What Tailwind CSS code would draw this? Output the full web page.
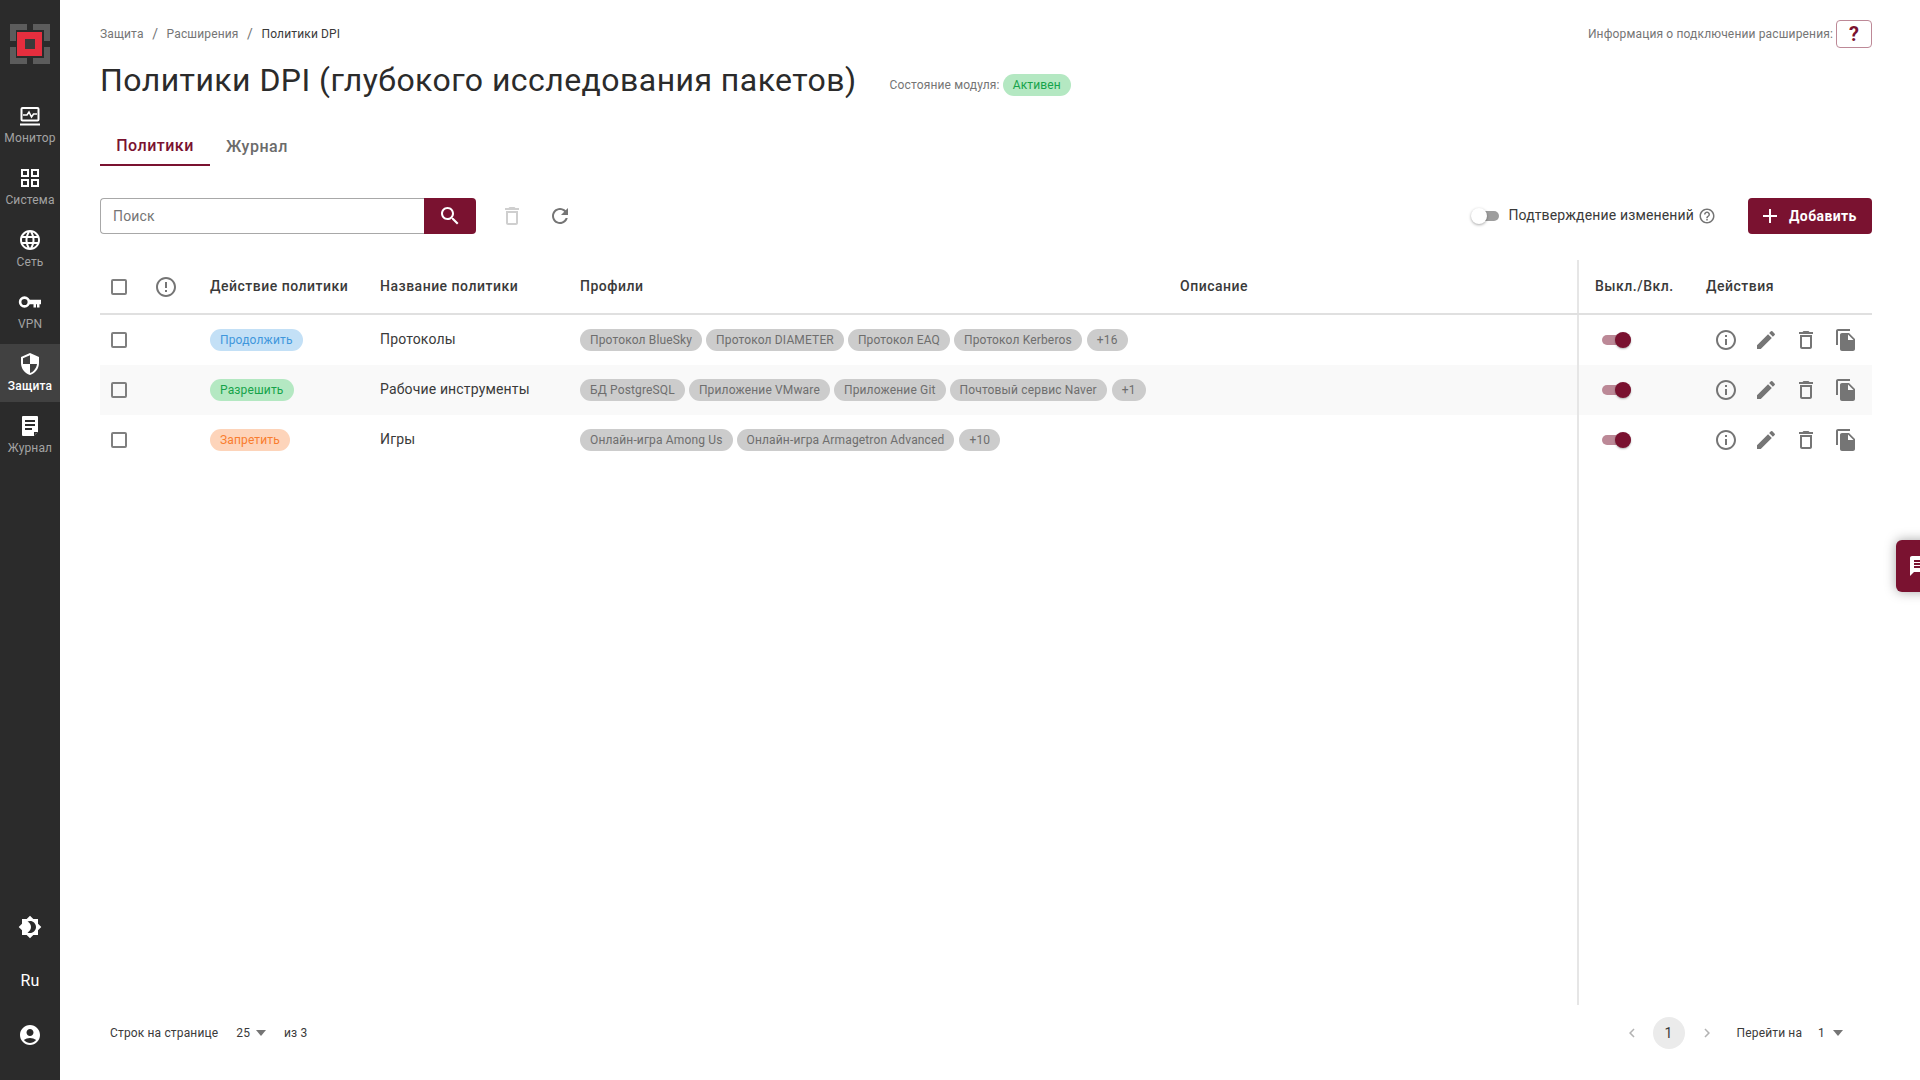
<!DOCTYPE html>
<html lang="ru">
<head>
<meta charset="utf-8">
<title>Политики DPI</title>
<script src="https://cdn.jsdelivr.net/npm/@tailwindcss/browser@4"></script>
</head>
<body class="font-['Roboto',sans-serif] bg-white text-[#2b2b2b] tracking-[0.15px]">
<div class="relative flex h-[1080px] w-[1920px] overflow-hidden">
  <!-- Sidebar -->
  <aside class="flex h-full w-[60px] shrink-0 flex-col items-center bg-[#2b2b2b] text-[12px] text-[#a3a3a3]">
    <svg class="mt-[24px] h-[40px] w-[40px]" viewBox="0 0 40 40">
      <path fill="#5c5c5c" d="M0 0h17v6H6v11H0zM23 0h17v17h-6V6H23zM0 23h6v11h11v6H0zM34 23h6v17H23v-6h11z"/>
      <rect x="7" y="8" width="25" height="24" fill="#e62e3e"/>
      <rect x="15" y="15" width="10" height="10" fill="#3a3a3a"/>
    </svg>
    <nav class="mt-[32px] flex w-full flex-col gap-[4px]">
      <a class="flex h-[58px] flex-col items-center pt-[9px]">
        <svg class="h-[24px] w-[24px]" viewBox="0 0 24 24" fill="none" stroke="#fff" stroke-width="2"><rect x="3.5" y="3" width="17" height="12.5" rx="1"/><path stroke-width="1.6" d="M5 10h4l2-3 2.5 5 2-3H19"/><path d="M2 19.5h20"/></svg>
        <span class="mt-[1px] leading-[16px]">Монитор</span>
      </a>
      <a class="flex h-[58px] flex-col items-center pt-[8px]">
        <svg class="h-[24px] w-[24px]" viewBox="0 0 24 24" fill="#fff"><path d="M3 3v8h8V3H3zm6 6H5V5h4v4zm-6 4v8h8v-8H3zm6 6H5v-4h4v4zm4-16v8h8V3h-8zm6 6h-4V5h4v4zm-6 4v8h8v-8h-8zm6 6h-4v-4h4v4z"/></svg>
        <span class="mt-[2px] leading-[16px]">Система</span>
      </a>
      <a class="flex h-[58px] flex-col items-center pt-[8px]">
        <svg class="h-[24px] w-[24px]" viewBox="0 0 24 24" fill="#fff"><path d="M11.99 2C6.47 2 2 6.48 2 12s4.47 10 9.99 10C17.52 22 22 17.52 22 12S17.52 2 11.99 2zm6.93 6h-2.95c-.32-1.25-.78-2.45-1.38-3.56 1.84.63 3.37 1.91 4.33 3.56zM12 4.04c.83 1.2 1.48 2.53 1.91 3.96h-3.82c.43-1.43 1.08-2.76 1.91-3.96zM4.26 14C4.1 13.36 4 12.69 4 12s.1-1.36.26-2h3.38c-.08.66-.14 1.32-.14 2 0 .68.06 1.34.14 2H4.26zm.82 2h2.95c.32 1.25.78 2.45 1.38 3.56-1.84-.63-3.37-1.9-4.33-3.56zm2.95-8H5.08c.96-1.66 2.49-2.93 4.33-3.56C8.81 5.55 8.35 6.75 8.03 8zM12 19.96c-.83-1.2-1.48-2.53-1.91-3.96h3.82c-.43 1.43-1.08 2.76-1.91 3.96zM14.34 14H9.66c-.09-.66-.16-1.32-.16-2 0-.68.07-1.35.16-2h4.68c.09.65.16 1.32.16 2 0 .68-.07 1.34-.16 2zm.25 5.56c.6-1.11 1.06-2.31 1.38-3.56h2.95c-.96 1.65-2.49 2.93-4.33 3.56zM16.36 14c.08-.66.14-1.32.14-2 0-.68-.06-1.34-.14-2h3.38c.16.64.26 1.31.26 2s-.1 1.36-.26 2h-3.38z"/></svg>
        <span class="mt-[2px] leading-[16px]">Сеть</span>
      </a>
      <a class="flex h-[58px] flex-col items-center pt-[8px]">
        <svg class="h-[24px] w-[24px]" viewBox="0 0 24 24" fill="#fff"><circle cx="6.5" cy="12" r="4.4" fill="none" stroke="#fff" stroke-width="2.6"/><path d="M10.5 9.8H23v4.4h-1.5V17.5h-2.5v-3.3h-1v3.3h-2.5v-3.3h-5z"/></svg>
        <span class="mt-[2px] leading-[16px]">VPN</span>
      </a>
      <a class="flex h-[58px] flex-col items-center bg-[#414141] pt-[8px] text-white">
        <svg class="h-[24px] w-[24px]" viewBox="0 0 24 24" fill="#fff"><path d="M12 1 3 5v6c0 5.55 3.84 10.74 9 12 5.16-1.26 9-6.45 9-12V5l-9-4zm0 10.99h7c-.53 4.12-3.28 7.79-7 8.94V12H5V6.3l7-3.11v8.8z"/></svg>
        <span class="mt-[2px] font-medium leading-[16px]">Защита</span>
      </a>
      <a class="flex h-[58px] flex-col items-center pt-[8px]">
        <svg class="h-[24px] w-[24px]" viewBox="0 0 24 24"><path fill="#fff" d="M5 2h14a1 1 0 0 1 1 1v15l-4 4H5a1 1 0 0 1-1-1V3a1 1 0 0 1 1-1z"/><path fill="#2b2b2b" d="M7 6h10v2H7zM7 10h10v2H7zM7 14h7v2H7zM16 22v-4h4l-1 1.6h-1.4V21z"/></svg>
        <span class="mt-[2px] leading-[16px]">Журнал</span>
      </a>
    </nav>
    <div class="mt-auto flex w-full flex-col items-center pb-[33px] text-white">
      <svg class="h-[24px] w-[24px]" viewBox="0 0 24 24" fill="#fff"><path d="M20 8.69V4h-4.69L12 .69 8.69 4H4v4.69L.69 12 4 15.31V20h4.69L12 23.31 15.31 20H20v-4.69L23.31 12 20 8.69zM12 18c-.89 0-1.74-.2-2.5-.55C11.56 16.5 13 14.42 13 12s-1.44-4.5-3.5-5.45C10.26 6.2 11.11 6 12 6c3.31 0 6 2.69 6 6s-2.69 6-6 6z"/></svg>
      <span class="mt-[30px] text-[16px] leading-[24px]">Ru</span>
      <svg class="mt-[30px] h-[24px] w-[24px]" viewBox="0 0 24 24" fill="#fff"><path d="M12 2C6.48 2 2 6.48 2 12s4.48 10 10 10 10-4.48 10-10S17.52 2 12 2zm0 4c1.93 0 3.5 1.57 3.5 3.5S13.93 13 12 13s-3.5-1.57-3.5-3.5S10.07 6 12 6zm0 14c-2.03 0-4.43-.82-6.14-2.88C7.55 15.8 9.68 15 12 15s4.45.8 6.14 2.12C16.43 19.18 14.03 20 12 20z"/></svg>
    </div>
  </aside>

  <!-- Main -->
  <main class="flex h-full min-w-0 flex-1 flex-col pl-[40px] pr-[48px]">
    <div class="flex h-[28px] mt-[20px] items-center justify-between text-[12px] text-[#757575]">
      <div class="flex items-center">
        <span>Защита</span><span class="mx-[8.5px] text-[14px]">/</span><span>Расширения</span><span class="mx-[8.5px] text-[14px]">/</span><span class="text-[#3a3a3a]">Политики DPI</span>
      </div>
      <div class="flex items-center">
        <span>Информация о подключении расширения:</span>
        <button class="ml-[3px] flex h-[28px] w-[36px] items-center justify-center rounded-[4px] border border-[#bd8997] text-[20px] font-bold text-[#7a1230]">?</button>
      </div>
    </div>

    <div class="mt-[8px] flex h-[48px] items-center">
      <h1 class="text-[32px] font-normal tracking-[0.45px] leading-[48px] text-[#2b2b2b]">Политики DPI (глубокого исследования пакетов)</h1>
      <span class="ml-[33px] mt-[10px] text-[12px] text-[#757575]">Состояние модуля:</span>
      <span class="ml-[3px] mt-[10px] flex h-[22px] items-center rounded-full bg-[#b4e8c2] px-[10px] text-[12px] text-[#16a34a]">Активен</span>
    </div>

    <div class="mt-[18px] flex h-[44px] text-[16px] font-medium tracking-[0.5px]">
      <div class="flex h-full w-[110px] items-center justify-center border-b-2 border-[#7a1230] pt-[5px] text-[#7a1230]">Политики</div>
      <div class="ml-[16px] flex h-full items-center pt-[5px] text-[#6b6b6b]">Журнал</div>
    </div>

    <div class="mt-[32px] flex h-[36px] items-center">
      <div class="flex h-[36px] w-[324px] items-center rounded-l-[4px] border border-r-0 border-[#a8a8a8] pl-[12px] text-[14px] text-[#757575]">Поиск</div>
      <button class="flex h-[36px] w-[52px] items-center justify-center rounded-r-[4px] bg-[#7a1230]">
        <svg class="h-[24px] w-[24px]" viewBox="0 0 24 24" fill="#fff"><path d="M15.5 14h-.79l-.28-.27C15.41 12.59 16 11.11 16 9.5 16 5.91 13.09 3 9.5 3S3 5.91 3 9.5 5.91 16 9.5 16c1.61 0 3.09-.59 4.23-1.57l.27.28v.79l5 4.99L20.49 19l-4.99-5zm-6 0C7.01 14 5 11.99 5 9.5S7.01 5 9.5 5 14 7.01 14 9.5 11.99 14 9.5 14z"/></svg>
      </button>
      <svg class="ml-[24px] h-[24px] w-[24px]" viewBox="0 0 24 24" fill="#cfcfcf"><path d="M6 19c0 1.1.9 2 2 2h8c1.1 0 2-.9 2-2V7H6v12zM8 9h8v10H8V9zm7.5-5-1-1h-5l-1 1H5v2h14V4h-3.5z"/></svg>
      <svg class="ml-[24px] h-[24px] w-[24px]" viewBox="0 0 24 24" fill="#757575"><path d="M17.65 6.35C16.2 4.9 14.21 4 12 4c-4.42 0-7.99 3.58-7.99 8s3.57 8 7.99 8c3.73 0 6.84-2.55 7.73-6h-2.08c-.82 2.33-3.04 4-5.65 4-3.31 0-6-2.69-6-6s2.69-6 6-6c1.66 0 3.14.69 4.22 1.78L13 11h7V4l-2.35 2.35z"/></svg>
      <div class="ml-auto flex items-center">
        <span class="relative block h-[10px] w-[20px] translate-x-[9px] rounded-full bg-[#9e9e9e]"><span class="absolute left-[-8px] top-[-3px] block h-[16px] w-[16px] rounded-full bg-white shadow-[0_1px_3px_rgba(0,0,0,0.35)]"></span></span>
        <span class="ml-[18px] pb-[1px] text-[14px] text-[#3a3a3a]">Подтверждение изменений</span>
        <svg class="ml-[4px] h-[18px] w-[18px]" viewBox="0 0 24 24" fill="#757575"><path d="M11 18h2v-2h-2v2zm1-16C6.48 2 2 6.48 2 12s4.48 10 10 10 10-4.48 10-10S17.52 2 12 2zm0 18c-4.41 0-8-3.59-8-8s3.59-8 8-8 8 3.59 8 8-3.59 8-8 8zm0-14c-2.21 0-4 1.79-4 4h2c0-1.1.9-2 2-2s2 .9 2 2c0 2-3 1.75-3 5h2c0-2.25 3-2.5 3-5 0-2.21-1.79-4-4-4z"/></svg>
        <button class="ml-[32px] flex h-[36px] w-[124px] items-center rounded-[4px] bg-[#7a1230] pl-[10px] text-[14px] font-bold tracking-[0.4px] text-white">
          <svg class="mr-[7px] h-[24px] w-[24px]" viewBox="0 0 24 24" fill="#fff"><path d="M19 13h-6v6h-2v-6H5v-2h6V5h2v6h6v2z"/></svg>Добавить
        </button>
      </div>
    </div>

    <!-- Table -->
    <div class="mt-[26px] flex min-h-0 flex-1 flex-col text-[14px]">
      <div class="flex h-[55px] border-b-2 border-[#e0e0e0] font-medium tracking-[0.5px] text-[#3a3a3a]">
        <div class="flex w-[1477px] items-center">
          <div class="w-[50px] pl-[11px]"><span class="block h-[16px] w-[16px] rounded-[2px] border-2 border-[#7f7f7f]"></span></div>
          <div class="w-[60px] pl-[4px]"><svg class="h-[24px] w-[24px]" viewBox="0 0 24 24" fill="#757575"><path d="M11 15h2v2h-2zm0-8h2v6h-2zm.99-5C6.47 2 2 6.48 2 12s4.47 10 9.99 10C17.52 22 22 17.52 22 12S17.52 2 11.99 2zM12 20c-4.42 0-8-3.58-8-8s3.58-8 8-8 8 3.58 8 8-3.58 8-8 8z"/></svg></div>
          <div class="w-[170px]">Действие политики</div>
          <div class="w-[200px]">Название политики</div>
          <div class="w-[600px]">Профили</div>
          <div>Описание</div>
        </div>
        <div class="flex w-[295px] items-center border-l-2 border-[#e6e6e6] pl-[16px]">
          <div class="w-[111px]">Выкл./Вкл.</div>
          <div>Действия</div>
        </div>
      </div>

      <div class="flex h-[50px] text-[#3a3a3a]">
        <div class="flex w-[1477px] items-center">
          <div class="w-[50px] pl-[11px]"><span class="block h-[16px] w-[16px] rounded-[2px] border-2 border-[#7f7f7f]"></span></div>
          <div class="w-[60px]"></div>
          <div class="w-[170px]"><span class="inline-flex h-[22px] items-center rounded-full bg-[#c3e0f6] px-[10px] text-[12px] text-[#3f97dc]">Продолжить</span></div>
          <div class="w-[200px] pb-[2px]">Протоколы</div>
          <div class="flex gap-[4px] text-[12px] text-[#6e6e6e]">
            <span class="flex h-[22px] items-center rounded-full bg-[#cccccc] px-[10px]">Протокол BlueSky</span>
            <span class="flex h-[22px] items-center rounded-full bg-[#cccccc] px-[10px]">Протокол DIAMETER</span>
            <span class="flex h-[22px] items-center rounded-full bg-[#cccccc] px-[10px]">Протокол EAQ</span>
            <span class="flex h-[22px] items-center rounded-full bg-[#cccccc] px-[10px]">Протокол Kerberos</span>
            <span class="ml-[1px] flex h-[22px] items-center rounded-full bg-[#cccccc] px-[10px]">+16</span>
          </div>
        </div>
        <div class="flex w-[295px] items-center border-l-2 border-[#e6e6e6] pl-[23px]">
          <span class="relative block h-[10px] w-[29px] rounded-full bg-[#bc8997]"><span class="absolute right-0 top-[-3px] block h-[16px] w-[16px] rounded-full bg-[#7a1230] shadow-[0_1px_2px_rgba(0,0,0,0.3)]"></span></span>
          <div class="ml-[83px] flex gap-[16px]">
            <svg class="h-[24px] w-[24px]" viewBox="0 0 24 24" fill="#757575"><path d="M11 7h2v2h-2zm0 4h2v6h-2zm1-9C6.48 2 2 6.48 2 12s4.48 10 10 10 10-4.48 10-10S17.52 2 12 2zm0 18c-4.41 0-8-3.59-8-8s3.59-8 8-8 8 3.59 8 8-3.59 8-8 8z"/></svg>
            <svg class="h-[24px] w-[24px]" viewBox="0 0 24 24" fill="#757575"><path d="M3 17.25V21h3.75L17.81 9.94l-3.75-3.75L3 17.25zM20.71 7.04c.39-.39.39-1.02 0-1.41l-2.34-2.34a.9959.9959 0 0 0-1.41 0l-1.83 1.83 3.75 3.75 1.83-1.83z"/></svg>
            <svg class="h-[24px] w-[24px]" viewBox="0 0 24 24" fill="#757575"><path d="M6 19c0 1.1.9 2 2 2h8c1.1 0 2-.9 2-2V7H6v12zM8 9h8v10H8V9zm7.5-5-1-1h-5l-1 1H5v2h14V4h-3.5z"/></svg>
            <svg class="h-[24px] w-[24px]" viewBox="0 0 24 24" fill="#757575"><path d="M16 1H4c-1.1 0-2 .9-2 2v14h2V3h12V1zm-1 4 6 6v10c0 1.1-.9 2-2 2H7.99C6.89 23 6 22.1 6 21l.01-14c0-1.1.89-2 1.99-2h7zm-1 7h5.5L14 6.5V12z"/></svg>
          </div>
        </div>
      </div>

      <div class="flex h-[50px] bg-[#f9f9f9] text-[#3a3a3a]">
        <div class="flex w-[1477px] items-center">
          <div class="w-[50px] pl-[11px]"><span class="block h-[16px] w-[16px] rounded-[2px] border-2 border-[#7f7f7f]"></span></div>
          <div class="w-[60px]"></div>
          <div class="w-[170px]"><span class="inline-flex h-[22px] items-center rounded-full bg-[#b4e8c2] px-[10px] text-[12px] text-[#16a34a]">Разрешить</span></div>
          <div class="w-[200px] pb-[2px]">Рабочие инструменты</div>
          <div class="flex gap-[4px] text-[12px] text-[#6e6e6e]">
            <span class="flex h-[22px] items-center rounded-full bg-[#cccccc] px-[10px]">БД PostgreSQL</span>
            <span class="flex h-[22px] items-center rounded-full bg-[#cccccc] px-[10px]">Приложение VMware</span>
            <span class="flex h-[22px] items-center rounded-full bg-[#cccccc] px-[10px]">Приложение Git</span>
            <span class="flex h-[22px] items-center rounded-full bg-[#cccccc] px-[10px]">Почтовый сервис Naver</span>
            <span class="ml-[1px] flex h-[22px] items-center rounded-full bg-[#cccccc] px-[10px]">+1</span>
          </div>
        </div>
        <div class="flex w-[295px] items-center border-l-2 border-[#e6e6e6] pl-[23px]">
          <span class="relative block h-[10px] w-[29px] rounded-full bg-[#bc8997]"><span class="absolute right-0 top-[-3px] block h-[16px] w-[16px] rounded-full bg-[#7a1230] shadow-[0_1px_2px_rgba(0,0,0,0.3)]"></span></span>
          <div class="ml-[83px] flex gap-[16px]">
            <svg class="h-[24px] w-[24px]" viewBox="0 0 24 24" fill="#757575"><path d="M11 7h2v2h-2zm0 4h2v6h-2zm1-9C6.48 2 2 6.48 2 12s4.48 10 10 10 10-4.48 10-10S17.52 2 12 2zm0 18c-4.41 0-8-3.59-8-8s3.59-8 8-8 8 3.59 8 8-3.59 8-8 8z"/></svg>
            <svg class="h-[24px] w-[24px]" viewBox="0 0 24 24" fill="#757575"><path d="M3 17.25V21h3.75L17.81 9.94l-3.75-3.75L3 17.25zM20.71 7.04c.39-.39.39-1.02 0-1.41l-2.34-2.34a.9959.9959 0 0 0-1.41 0l-1.83 1.83 3.75 3.75 1.83-1.83z"/></svg>
            <svg class="h-[24px] w-[24px]" viewBox="0 0 24 24" fill="#757575"><path d="M6 19c0 1.1.9 2 2 2h8c1.1 0 2-.9 2-2V7H6v12zM8 9h8v10H8V9zm7.5-5-1-1h-5l-1 1H5v2h14V4h-3.5z"/></svg>
            <svg class="h-[24px] w-[24px]" viewBox="0 0 24 24" fill="#757575"><path d="M16 1H4c-1.1 0-2 .9-2 2v14h2V3h12V1zm-1 4 6 6v10c0 1.1-.9 2-2 2H7.99C6.89 23 6 22.1 6 21l.01-14c0-1.1.89-2 1.99-2h7zm-1 7h5.5L14 6.5V12z"/></svg>
          </div>
        </div>
      </div>

      <div class="flex h-[50px] text-[#3a3a3a]">
        <div class="flex w-[1477px] items-center">
          <div class="w-[50px] pl-[11px]"><span class="block h-[16px] w-[16px] rounded-[2px] border-2 border-[#7f7f7f]"></span></div>
          <div class="w-[60px]"></div>
          <div class="w-[170px]"><span class="inline-flex h-[22px] items-center rounded-full bg-[#fdd4ba] px-[10px] text-[12px] text-[#f97d2e]">Запретить</span></div>
          <div class="w-[200px] pb-[2px]">Игры</div>
          <div class="flex gap-[4px] text-[12px] text-[#6e6e6e]">
            <span class="flex h-[22px] items-center rounded-full bg-[#cccccc] px-[10px]">Онлайн-игра Among Us</span>
            <span class="flex h-[22px] items-center rounded-full bg-[#cccccc] px-[10px]">Онлайн-игра Armagetron Advanced</span>
            <span class="ml-[1px] flex h-[22px] items-center rounded-full bg-[#cccccc] px-[10px]">+10</span>
          </div>
        </div>
        <div class="flex w-[295px] items-center border-l-2 border-[#e6e6e6] pl-[23px]">
          <span class="relative block h-[10px] w-[29px] rounded-full bg-[#bc8997]"><span class="absolute right-0 top-[-3px] block h-[16px] w-[16px] rounded-full bg-[#7a1230] shadow-[0_1px_2px_rgba(0,0,0,0.3)]"></span></span>
          <div class="ml-[83px] flex gap-[16px]">
            <svg class="h-[24px] w-[24px]" viewBox="0 0 24 24" fill="#757575"><path d="M11 7h2v2h-2zm0 4h2v6h-2zm1-9C6.48 2 2 6.48 2 12s4.48 10 10 10 10-4.48 10-10S17.52 2 12 2zm0 18c-4.41 0-8-3.59-8-8s3.59-8 8-8 8 3.59 8 8-3.59 8-8 8z"/></svg>
            <svg class="h-[24px] w-[24px]" viewBox="0 0 24 24" fill="#757575"><path d="M3 17.25V21h3.75L17.81 9.94l-3.75-3.75L3 17.25zM20.71 7.04c.39-.39.39-1.02 0-1.41l-2.34-2.34a.9959.9959 0 0 0-1.41 0l-1.83 1.83 3.75 3.75 1.83-1.83z"/></svg>
            <svg class="h-[24px] w-[24px]" viewBox="0 0 24 24" fill="#757575"><path d="M6 19c0 1.1.9 2 2 2h8c1.1 0 2-.9 2-2V7H6v12zM8 9h8v10H8V9zm7.5-5-1-1h-5l-1 1H5v2h14V4h-3.5z"/></svg>
            <svg class="h-[24px] w-[24px]" viewBox="0 0 24 24" fill="#757575"><path d="M16 1H4c-1.1 0-2 .9-2 2v14h2V3h12V1zm-1 4 6 6v10c0 1.1-.9 2-2 2H7.99C6.89 23 6 22.1 6 21l.01-14c0-1.1.89-2 1.99-2h7zm-1 7h5.5L14 6.5V12z"/></svg>
          </div>
        </div>
      </div>

      <div class="ml-[1477px] w-[295px] flex-1 border-l-2 border-[#e6e6e6]"></div>
    </div>

    <!-- Footer -->
    <div class="flex h-[75px] items-start pt-[12px] text-[12px] text-[#3a3a3a]">
      <div class="flex h-[32px] items-center pl-[10px]">
        <span>Строк на странице</span>
        <span class="ml-[18px]">25</span>
        <svg class="ml-[6px] h-[6px] w-[10px]" viewBox="0 0 10 5" preserveAspectRatio="none" fill="#757575"><path d="M0 0h10L5 5z"/></svg>
        <span class="ml-[18px]">из 3</span>
      </div>
      <div class="ml-auto flex h-[32px] items-center pr-[29px]">
        <svg class="h-[18px] w-[18px]" viewBox="0 0 24 24" fill="#b3b3b3"><path d="M15.41 7.41 14 6l-6 6 6 6 1.41-1.41L10.83 12z"/></svg>
        <span class="ml-[12px] flex h-[32px] w-[32px] items-center justify-center rounded-full bg-[#ebebeb] text-[14px]">1</span>
        <svg class="ml-[13px] h-[18px] w-[18px]" viewBox="0 0 24 24" fill="#b3b3b3"><path d="M8.59 16.59 10 18l6-6-6-6-1.41 1.41L13.17 12z"/></svg>
        <span class="ml-[21px]">Перейти на</span>
        <span class="ml-[16px]">1</span>
        <svg class="ml-[8px] h-[6px] w-[10px]" viewBox="0 0 10 5" preserveAspectRatio="none" fill="#757575"><path d="M0 0h10L5 5z"/></svg>
      </div>
    </div>
  </main>

  <!-- Feedback tab -->
  <div class="absolute left-[1896px] top-[540px] flex h-[52px] w-[40px] items-center rounded-[6px] bg-[#7a1230] pl-[12px] shadow-[0_0_12px_rgba(0,0,0,0.35)]">
    <svg class="h-[24px] w-[24px] shrink-0" viewBox="0 0 24 24" fill="#fff"><path d="M20 2H4c-1.1 0-1.99.9-1.99 2L2 22l4-4h14c1.1 0 2-.9 2-2V4c0-1.1-.9-2-2-2zM6 9h12v2H6V9zm8 5H6v-2h8v2zm4-6H6V6h12v2z"/></svg>
  </div>
</div>
</body>
</html>
